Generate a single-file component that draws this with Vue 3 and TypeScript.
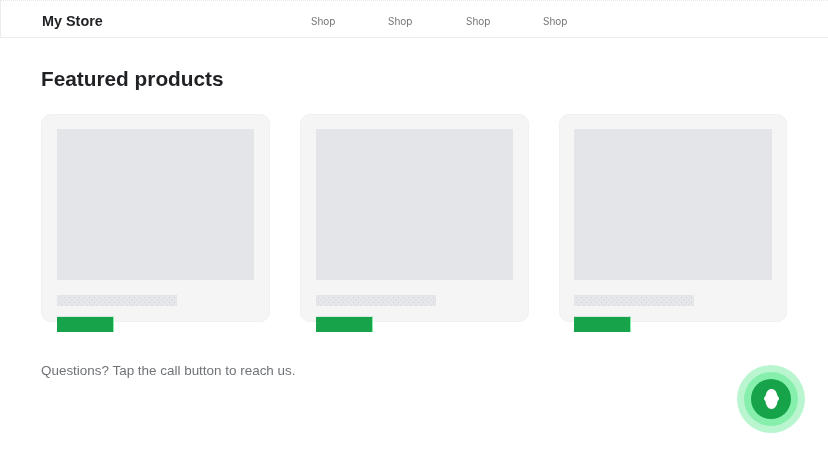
<script setup lang="ts">
const navLinks = ['Shop', 'Shop', 'Shop', 'Shop']
const products = [1, 2, 3]
</script>

<template>
  <div class="page">
    <header class="site-header">
      <div class="logo">My Store</div>
      <nav class="nav">
        <a v-for="(link, i) in navLinks" :key="i" class="nav-link">{{ link }}</a>
      </nav>
    </header>

    <main class="content">
      <h1 class="title">Featured products</h1>
      <div class="grid">
        <div v-for="p in products" :key="p" class="card">
          <div class="thumb" />
          <div class="name-bar" />
          <div class="buy-btn" />
        </div>
      </div>
      <p class="note">Questions? Tap the call button to reach us.</p>
    </main>

    <button class="call-btn" aria-label="Call">
      <span class="ring-outer" />
      <span class="ring-mid" />
      <span class="ring-core">
        <svg width="15" height="20" viewBox="0 0 15 20">
          <path d="M7.5 0C10.6 0 12.6 2.6 13.2 6C13.4 7.2 14.4 8 15 8.8V10.2C14.4 11 13.6 11.6 13.4 12.8C13 16.8 10.8 20 7.5 20C4.2 20 2 16.8 1.6 12.8C1.4 11.6 0.6 11 0 10.2V8.8C0.6 8 1.6 7.2 1.8 6C2.4 2.6 4.4 0 7.5 0Z" fill="#fff" />
        </svg>
      </span>
    </button>
  </div>
</template>

<style scoped>
.page {
  position: relative;
  width: 828px;
  height: 466px;
  overflow: hidden;
  background: #fff;
  font-family: "Liberation Sans", Arial, sans-serif;
  color: #1f2124;
}

.site-header {
  display: flex;
  align-items: center;
  height: 38px;
  box-sizing: border-box;
  padding: 3px 0 0 40.6px;
  border: 1px solid #eceded;
  border-top: 1px dotted #e5e7eb;
  border-right: none;
}
.logo {
  width: 269px;
  font-size: 14.4px;
  font-weight: 700;
  will-change: transform;
}
.nav {
  display: flex;
  gap: 53px;
}
.nav-link {
  font-family: Inter, sans-serif;
  font-size: 10px;
  color: #737373;
  will-change: transform;
}

.content {
  padding: 0 41.4px;
}
.title {
  margin: 28px 0 0;
  font-size: 20.8px;
  line-height: 26px;
  font-weight: 700;
  will-change: transform;
}

.grid {
  display: grid;
  grid-template-columns: repeat(3, 228.4px);
  gap: 30.4px;
  margin-top: 22px;
}
.card {
  height: 208px;
  box-sizing: border-box;
  padding: 14px 14.4px;
  background: #f5f5f5;
  border: 1px solid #f0f0f0;
  border-radius: 10px;
}
.thumb {
  height: 151px;
  background: #e4e5e9;
}
.name-bar {
  width: 120px;
  height: 11px;
  margin-top: 15px;
  background-color: #e6e7ea;
  background-image:
    radial-gradient(#cdd0d4 0.6px, transparent 0.9px),
    radial-gradient(#cdd0d4 0.6px, transparent 0.9px);
  background-size: 5px 5px;
  background-position: 0 0, 2.5px 2.5px;
}
.buy-btn {
  width: 57px;
  height: 16px;
  margin-top: 10px;
  box-sizing: border-box;
  background: #16a34a;
  border-right: 1px solid #86efac;
  border-top: 1px solid #d8e8dd;
}

.note {
  margin: 40px 0 0;
  font-size: 13.44px;
  line-height: 18px;
  color: #6f7276;
  will-change: transform;
}

.call-btn {
  position: absolute;
  left: 737px;
  top: 365px;
  width: 68px;
  height: 68px;
  padding: 0;
  border: none;
  background: none;
}
.ring-outer,
.ring-mid,
.ring-core {
  position: absolute;
  border-radius: 50%;
}
.ring-outer {
  inset: 0;
  background: #b9f6d0;
}
.ring-mid {
  inset: 7px;
  background: #86efac;
}
.ring-core {
  inset: 14px;
  display: flex;
  align-items: center;
  justify-content: center;
  background: #16a34a;
}
</style>
